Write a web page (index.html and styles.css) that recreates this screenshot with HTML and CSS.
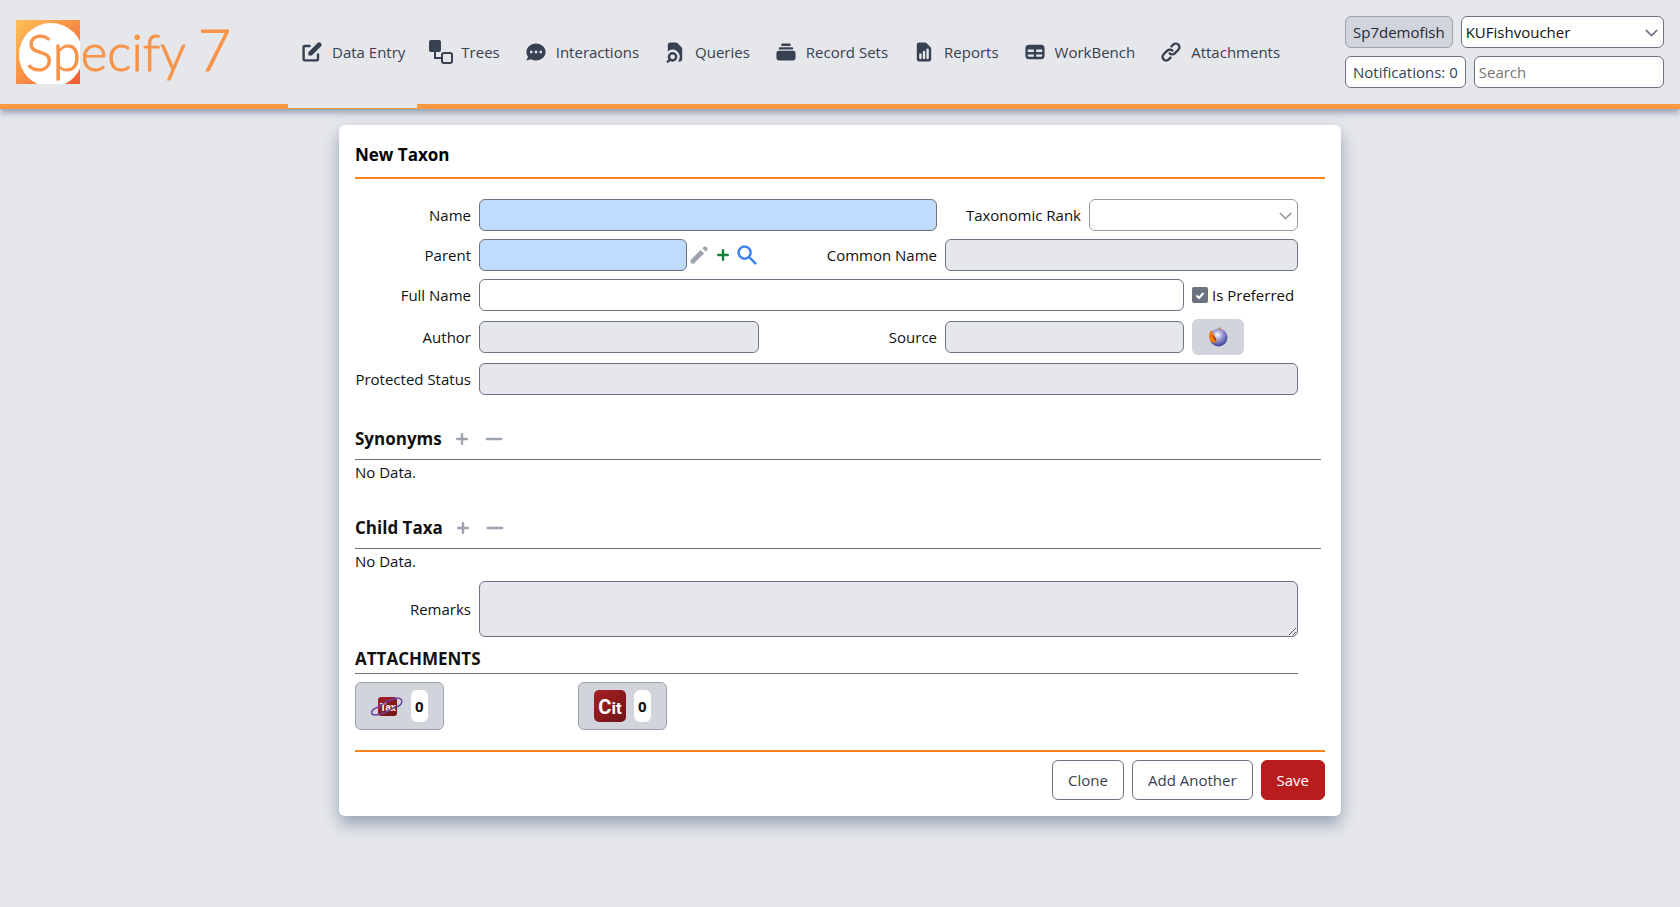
FILE: index.html
```html
<!DOCTYPE html>
<html lang="en">
<head>
  <meta charset="UTF-8">
  <meta name="viewport" content="width=device-width, initial-scale=1.0">
  <title>New Taxon | Specify 7</title>
  <link rel="stylesheet" href="styles.css">
</head>
<body>
  <header class="header">
    <a href="#" class="logo" aria-label="Specify 7">
      <svg width="224" height="72" viewBox="0 0 224 72">
        <defs>
          <linearGradient id="logo-bg" x1="0" y1="0" x2="1" y2="1">
            <stop offset="0" stop-color="#fec057"/>
            <stop offset="1" stop-color="#f15d33"/>
          </linearGradient>
          <clipPath id="logo-clip"><rect y="4" width="64" height="64"/></clipPath>
        </defs>
        <rect y="4" width="64" height="64" fill="url(#logo-bg)"/>
        <circle cx="35" cy="39" r="32" fill="#fff" clip-path="url(#logo-clip)"/>
        <text x="10" y="55" class="logo-text">Specify</text>
        <text x="182" y="55" class="logo-text logo-number">7</text>
      </svg>
    </a>

    <nav class="nav">
      <a href="#" class="nav-link active">
        <svg class="icon" viewBox="0 0 20 20"><path d="M17.414 2.586a2 2 0 00-2.828 0L7 10.172V13h2.828l7.586-7.586a2 2 0 000-2.828z"/><path d="M2 6a2 2 0 012-2h4a1 1 0 010 2H4v10h10v-4a1 1 0 112 0v4a2 2 0 01-2 2H4a2 2 0 01-2-2V6z"/></svg>
        Data Entry
      </a>
      <a href="#" class="nav-link">
        <svg class="icon" viewBox="0 0 24 24"><rect width="12" height="12" rx="2"/><path d="M6 11v7h7" fill="none" stroke="currentColor" stroke-width="2"/><rect x="13" y="13" width="10" height="10" rx="2" fill="none" stroke="currentColor" stroke-width="2"/></svg>
        Trees
      </a>
      <a href="#" class="nav-link">
        <svg class="icon" viewBox="0 0 20 20"><path fill-rule="evenodd" d="M18 10c0 3.866-3.582 7-8 7a8.841 8.841 0 01-4.083-.98L2 17l1.338-3.123C2.493 12.767 2 11.434 2 10c0-3.866 3.582-7 8-7s8 3.134 8 7zM7 9H5v2h2V9zm8 0h-2v2h2V9zM9 9h2v2H9V9z"/></svg>
        Interactions
      </a>
      <a href="#" class="nav-link">
        <svg class="icon" viewBox="0 0 20 20"><path d="M4 4a2 2 0 012-2h4.586A2 2 0 0112 2.586L15.414 6A2 2 0 0116 7.414V16a2 2 0 01-2 2h-1.528A6 6 0 004 9.528V4z"/><path fill-rule="evenodd" d="M8 10a4 4 0 00-3.446 6.032l-1.261 1.26a1 1 0 101.414 1.415l1.261-1.261A4 4 0 108 10zm-2 4a2 2 0 114 0 2 2 0 01-4 0z"/></svg>
        Queries
      </a>
      <a href="#" class="nav-link">
        <svg class="icon" viewBox="0 0 20 20"><path d="M7 3a1 1 0 000 2h6a1 1 0 100-2H7zM4 7a1 1 0 011-1h10a1 1 0 110 2H5a1 1 0 01-1-1zM2 11a2 2 0 012-2h12a2 2 0 012 2v4a2 2 0 01-2 2H4a2 2 0 01-2-2v-4z"/></svg>
        Record Sets
      </a>
      <a href="#" class="nav-link">
        <svg class="icon" viewBox="0 0 20 20"><path fill-rule="evenodd" d="M6 2a2 2 0 00-2 2v12a2 2 0 002 2h8a2 2 0 002-2V7.414A2 2 0 0015.414 6L12 2.586A2 2 0 0010.586 2H6zm2 10a1 1 0 10-2 0v3a1 1 0 102 0v-3zm2-3a1 1 0 011 1v5a1 1 0 11-2 0v-5a1 1 0 011-1zm4-1a1 1 0 10-2 0v7a1 1 0 102 0V8z"/></svg>
        Reports
      </a>
      <a href="#" class="nav-link">
        <svg class="icon" viewBox="0 0 20 20"><path fill-rule="evenodd" d="M5 4a3 3 0 00-3 3v6a3 3 0 003 3h10a3 3 0 003-3V7a3 3 0 00-3-3H5zm-1 9v-1h5v2H5a1 1 0 01-1-1zm7 1h4a1 1 0 001-1v-1h-5v2zm0-4h5V8h-5v2zM9 8H4v2h5V8z"/></svg>
        WorkBench
      </a>
      <a href="#" class="nav-link">
        <svg class="icon" viewBox="0 0 20 20"><path fill-rule="evenodd" d="M12.586 4.586a2 2 0 112.828 2.828l-3 3a2 2 0 01-2.828 0 1 1 0 00-1.414 1.414 4 4 0 005.656 0l3-3a4 4 0 00-5.656-5.656l-1.5 1.5a1 1 0 101.414 1.414l1.5-1.5zm-5 5a2 2 0 012.828 0 1 1 0 101.414-1.414 4 4 0 00-5.656 0l-3 3a4 4 0 105.656 5.656l1.5-1.5a1 1 0 10-1.414-1.414l-1.5 1.5a2 2 0 11-2.828-2.828l3-3z"/></svg>
        Attachments
      </a>
    </nav>

    <div class="tools">
      <div class="tools-row">
        <button type="button" class="small-button user">Sp7demofish</button>
        <select class="field" aria-label="Collection">
          <option>KUFishvoucher</option>
        </select>
      </div>
      <div class="tools-row">
        <button type="button" class="small-button">Notifications: 0</button>
        <input type="search" class="field" placeholder="Search" aria-label="Search">
      </div>
    </div>
  </header>

  <main class="card">
    <h2 class="title">New Taxon</h2>

    <form class="form" id="taxon-form">
      <label for="name" class="first">Name</label>
      <input type="text" id="name" class="field required span-2">
      <label for="rank">Taxonomic Rank</label>
      <select id="rank" class="field span-2" disabled></select>

      <label for="parent" class="first">Parent</label>
      <div class="query-combo">
        <input type="text" id="parent" class="field required">
        <button type="button" class="icon-button gray" aria-label="Edit"><svg class="icon" viewBox="0 0 20 20"><path d="M13.586 3.586a2 2 0 112.828 2.828l-.793.793-2.828-2.828.793-.793zM11.379 5.793L3 14.172V17h2.828l8.38-8.379-2.83-2.828z"/></svg></button>
        <button type="button" class="icon-button green" aria-label="Add"><svg class="icon" viewBox="0 0 20 20"><path d="M10 5a1 1 0 011 1v3h3a1 1 0 110 2h-3v3a1 1 0 11-2 0v-3H6a1 1 0 110-2h3V6a1 1 0 011-1z"/></svg></button>
        <button type="button" class="icon-button blue" aria-label="Search"><svg class="icon" viewBox="0 0 20 20"><path fill-rule="evenodd" d="M8 4a4 4 0 100 8 4 4 0 000-8zM2 8a6 6 0 1110.89 3.476l4.817 4.817a1 1 0 01-1.414 1.414l-4.816-4.816A6 6 0 012 8z"/></svg></button>
      </div>
      <label for="common-name">Common Name</label>
      <input type="text" id="common-name" class="field muted span-3">

      <label for="full-name" class="first">Full Name</label>
      <input type="text" id="full-name" class="field span-4">
      <label class="check-label"><input type="checkbox" class="checkbox" checked>Is Preferred</label>

      <label for="author" class="first">Author</label>
      <input type="text" id="author" class="field muted">
      <label for="source">Source</label>
      <input type="text" id="source" class="field muted span-2">
      <button type="button" class="web-button" aria-label="Open web link">
        <svg width="20" height="20" viewBox="0 0 20 20">
          <defs>
            <radialGradient id="globe" cx=".45" cy=".35" r=".65">
              <stop offset="0" stop-color="#fff"/>
              <stop offset=".4" stop-color="#a3a3d8"/>
              <stop offset="1" stop-color="#3c3f9d"/>
            </radialGradient>
          </defs>
          <circle cx="10.500" cy="10.500" r="9" fill="url(#globe)"/>
          <path d="M3 3L5 6 9 14 8 16 3 15Q-1 9 3 3z" fill="#f07c10"/>
          <path d="M3 7L8 11 8 15z" fill="#b83c08"/>
          <path d="M10 2l2-2 1 2z" fill="#e0701a"/>
        </svg>
      </button>

      <label for="status" class="first">Protected Status</label>
      <input type="text" id="status" class="field muted span-5">

      <section class="subview">
        <h3 class="subview-title">Synonyms
          <button type="button" class="icon-button gray" aria-label="Add"><svg class="icon" viewBox="0 0 20 20"><path d="M10 5a1 1 0 011 1v3h3a1 1 0 110 2h-3v3a1 1 0 11-2 0v-3H6a1 1 0 110-2h3V6a1 1 0 011-1z"/></svg></button>
          <button type="button" class="icon-button gray" aria-label="Remove"><svg class="icon" viewBox="0 0 20 20"><path d="M3 10a1 1 0 011-1h12a1 1 0 110 2H4a1 1 0 01-1-1z"/></svg></button>
        </h3>
        <p>No Data.</p>
      </section>

      <section class="subview">
        <h3 class="subview-title">Child Taxa
          <button type="button" class="icon-button gray" aria-label="Add"><svg class="icon" viewBox="0 0 20 20"><path d="M10 5a1 1 0 011 1v3h3a1 1 0 110 2h-3v3a1 1 0 11-2 0v-3H6a1 1 0 110-2h3V6a1 1 0 011-1z"/></svg></button>
          <button type="button" class="icon-button gray" aria-label="Remove"><svg class="icon" viewBox="0 0 20 20"><path d="M3 10a1 1 0 011-1h12a1 1 0 110 2H4a1 1 0 01-1-1z"/></svg></button>
        </h3>
        <p>No Data.</p>
      </section>

      <label for="remarks" class="first">Remarks</label>
      <textarea id="remarks" class="field muted remarks span-5"></textarea>

      <h3 class="separator">ATTACHMENTS</h3>
      <div class="attachments">
        <button type="button" class="count-button">
          <svg width="32" height="32" viewBox="0 0 32 32" aria-label="Taxon attachments">
            <defs>
              <linearGradient id="red-bg" x1="0" y1="0" x2="1" y2="1">
                <stop offset="0" stop-color="#a82025"/>
                <stop offset="1" stop-color="#6e1416"/>
              </linearGradient>
            </defs>
            <rect x="7" y="7" width="19" height="19" rx="3" fill="url(#red-bg)"/>
            <text x="17" y="21" text-anchor="middle" class="tax-text">Tax</text>
            <path d="M7 17C-1 20-1 25 4 25 12 25 19 20 24 17 33 16 32 8 27 8 20 8 14 13 7 17" fill="none" stroke="#6f3f9c" stroke-width="1.500"/>
          </svg>
          <span class="count">0</span>
        </button>
        <button type="button" class="count-button">
          <svg width="32" height="32" viewBox="0 0 32 32" aria-label="Taxon citations">
            <rect width="32" height="32" rx="5" fill="url(#red-bg)"/>
            <text x="16" y="24" text-anchor="middle" class="cit-text"><tspan class="cit-capital">C</tspan>it</text>
          </svg>
          <span class="count">0</span>
        </button>
      </div>
    </form>

    <footer class="footer">
      <button type="button" class="button">Clone</button>
      <button type="button" class="button">Add Another</button>
      <button type="submit" form="taxon-form" class="button save">Save</button>
    </footer>
  </main>
</body>
</html>
```
FILE: styles.css
```css
* { box-sizing: border-box; }
body { margin: 0; min-height: 100vh; background: #e5e7eb; color: #111; font: 15px/24px "Open Sans", "Noto Sans", sans-serif; }
h2, h3, p { margin: 0; }
button, input, select, textarea { font: inherit; color: inherit; }
button { cursor: pointer; }

/* header */
.header { display: flex; padding: 0 16px; border-bottom: 1px solid #ff983f; box-shadow: 0 4px 6px rgba(100, 116, 139, .6); background: linear-gradient(#ff983f, #ff983f) bottom / 100% 4px no-repeat #e5e7eb; }
.logo { width: 272px; padding: 16px 0; }
.logo svg { display: block; }
.logo-text { font-family: Lato, sans-serif; font-weight: 300; font-size: 51px; fill: #f7944a; stroke: #f7944a; stroke-width: 1px; }
.logo-number { font-size: 57px; }
.nav { display: flex; flex: 1; }
.nav-link { display: flex; align-items: center; gap: 8px; padding: 0 12px 4px; color: #374151; text-decoration: none; white-space: nowrap; }
.nav-link.active { background: #e5e7eb; }
.icon { display: block; width: 24px; height: 24px; fill: currentColor; flex-shrink: 0; }
.tools { display: flex; flex-direction: column; gap: 8px; width: 319px; padding: 16px 0 20px; }
.tools-row { display: flex; gap: 8px; }
.tools-row .field { flex: 1; }
.small-button { height: 32px; padding: 0 7px; border: 1px solid #6b7280; border-radius: 6px; background: #fff; color: #374151; white-space: nowrap; }
.small-button.user { border-color: #9ca3af; background: #d1d5db; color: #1f2937; }

/* fields */
.field { width: 100%; min-width: 0; height: 32px; padding: 0 4px; border: 1px solid #6b7280; border-radius: 6px; background-color: #fff; appearance: none; }
.field::placeholder { color: #757575; opacity: 1; }
select.field { background-image: url("data:image/svg+xml,%3Csvg xmlns='http://www.w3.org/2000/svg' viewBox='0 0 20 20'%3E%3Cpath d='M5 8l5 5 5-5' fill='none' stroke='%236b7280' stroke-width='1.500' stroke-linecap='round'/%3E%3C/svg%3E"); background-repeat: no-repeat; background-position: right 1px center; background-size: 21px; }
.field:disabled { opacity: .7; }
.required { background-color: #bfdbfe; }
.muted { background-color: #e5e7eb; }
.checkbox { width: 16px; height: 16px; margin: 0; border-radius: 2px; appearance: none; background: #6b7280; }
.checkbox:checked { background-image: url("data:image/svg+xml,%3Csvg xmlns='http://www.w3.org/2000/svg' viewBox='0 0 16 16'%3E%3Cpath d='M4.500 8.500l2.500 2.500 4.500-5' fill='none' stroke='white' stroke-width='2'/%3E%3C/svg%3E"); }

/* card */
.card { max-width: 1002px; margin: 16px auto; padding: 16px; border-radius: 6px; background: #fff; box-shadow: 0 8px 16px rgba(100, 116, 139, .6); }
.title { padding-bottom: 8px; border-bottom: 2px solid #ff811a; font-size: 17px; line-height: 28px; font-weight: 700; color: #000; }
.form { display: grid; grid-template-columns: 116px 280fr 170fr 136fr 95fr 106fr 15fr; gap: 8px; align-items: center; padding: 20px 4px 20px 0; }
.form > label { text-align: right; white-space: nowrap; }
.form > .first { grid-column-start: 1; }
.span-2 { grid-column-end: span 2; }
.span-3 { grid-column-end: span 3; }
.span-4 { grid-column-end: span 4; }
.span-5 { grid-column-end: span 5; }
.query-combo { display: flex; align-items: center; }
.icon-button { padding: 0; border: 0; background: none; }
.gray { color: #9ca3af; }
.green { color: #15803d; }
.blue { color: #3b82f6; }
.form > .check-label { display: flex; align-items: center; gap: 4px; }
.web-button { display: flex; align-items: center; justify-content: center; justify-self: start; width: 52px; height: 36px; padding: 0; border: 0; border-radius: 6px; background: #d1d5db; }
.subview { grid-column: 1 / -1; padding-top: 24px; }
.subview-title { display: flex; gap: 8px; height: 33px; border-bottom: 1px solid #6b7280; font-size: 17px; font-weight: 700; }
.subview-title .icon-button { height: 24px; }
.remarks { display: block; height: 56px; resize: vertical; }
.separator { grid-column: 1 / 7; border-bottom: 1px solid #6b7280; font-size: 17px; line-height: 28px; font-weight: 700; }
.attachments { grid-column: 1 / 7; display: grid; grid-template-columns: repeat(auto-fill, 215px); gap: 8px; }
.count-button { display: flex; align-items: center; gap: 8px; justify-self: start; height: 48px; padding: 0 15px; border: 1px solid #9ca3af; border-radius: 6px; background: #d1d5db; }
.count { padding: 0 4px; border-radius: 6px; background: #fff; font-weight: 700; line-height: 32px; }
.tax-text { font: 700 10px Roboto, sans-serif; fill: #fff; }
.cit-text { font: 700 17px Roboto, sans-serif; fill: #fff; }
.cit-capital { font-size: 20px; }

.footer { display: flex; justify-content: flex-end; gap: 8px; padding-top: 8px; border-top: 2px solid #ff811a; }
.button { height: 40px; padding: 0 15px; border: 1px solid #6b7280; border-radius: 6px; background: #fff; color: #374151; }
.save { border-color: #b91c1c; background: #b91c1c; color: #fff; }
```
